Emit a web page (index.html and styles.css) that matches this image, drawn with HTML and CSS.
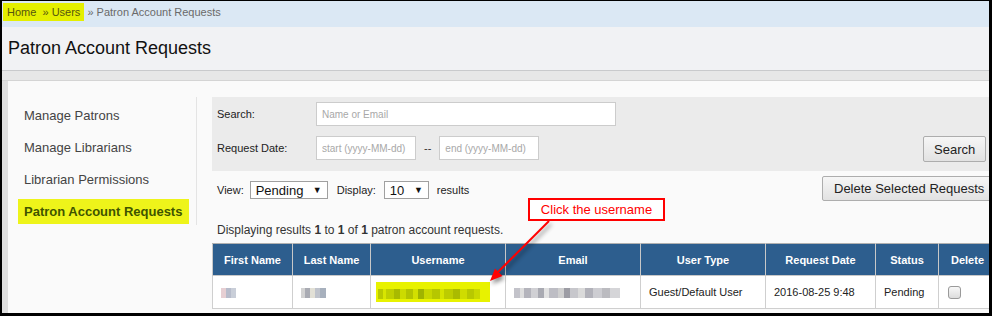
FILE: index.html
```html
<!DOCTYPE html>
<html lang="en">
<head>
    <meta charset="UTF-8">
    <title>Patron Account Requests</title>
    <link rel="stylesheet" href="styles.css">
</head>
<body>
    <div class="frame">
        <div class="breadcrumb">
            <span class="mark">Home&nbsp; » Users</span> » Patron Account Requests
        </div>

        <div class="page-header">
            <h1>Patron Account Requests</h1>
        </div>
        <div class="band"></div>

        <div class="content">
            <ul class="side-nav">
                <li>Manage Patrons</li>
                <li>Manage Librarians</li>
                <li>Librarian Permissions</li>
                <li class="active">Patron Account Requests</li>
            </ul>

            <div class="main">
                <div class="search-panel">
                    <div class="search-row">
                        <label>Search:</label>
                        <input class="field wide" type="text" placeholder="Name or Email">
                    </div>
                    <div class="search-row">
                        <label>Request Date:</label>
                        <input class="field date" type="text" placeholder="start (yyyy-MM-dd)">
                        <span class="dash">--</span>
                        <input class="field date" type="text" placeholder="end (yyyy-MM-dd)">
                        <button class="btn search-btn">Search</button>
                    </div>
                </div>

                <div class="view-row">
                    <span class="lbl">View:</span>
                    <div class="select view-select"><span>Pending</span><span class="caret">▼</span></div>
                    <span class="lbl">Display:</span>
                    <div class="select count-select"><span>10</span><span class="caret">▼</span></div>
                    <span class="lbl">results</span>
                    <button class="btn delete-btn">Delete Selected Requests</button>
                </div>

                <p class="info">Displaying results <b>1</b> to <b>1</b> of <b>1</b> patron account requests.</p>

                <table class="requests">
                    <colgroup>
                        <col style="width: 80px">
                        <col style="width: 78px">
                        <col style="width: 135px">
                        <col style="width: 135px">
                        <col style="width: 125px">
                        <col style="width: 110px">
                        <col style="width: 63px">
                        <col style="width: 58px">
                    </colgroup>
                    <thead>
                        <tr>
                            <th>First Name</th>
                            <th>Last Name</th>
                            <th>Username</th>
                            <th>Email</th>
                            <th>User Type</th>
                            <th>Request Date</th>
                            <th>Status</th>
                            <th>Delete</th>
                        </tr>
                    </thead>
                    <tbody>
                        <tr>
                            <td><span class="blur blur-first"></span></td>
                            <td><span class="blur blur-last"></span></td>
                            <td class="user-cell"><span class="user-mark"><span class="blur blur-user"></span></span></td>
                            <td><span class="blur blur-email"></span></td>
                            <td>Guest/Default User</td>
                            <td>2016-08-25 9:48</td>
                            <td>Pending</td>
                            <td><span class="check"></span></td>
                        </tr>
                    </tbody>
                </table>

                <!-- annotation -->
                <div class="callout">Click the username</div>
                <svg class="callout-arrow" width="80" height="75" viewBox="0 0 80 75">
                    <line x1="69" y1="7" x2="18" y2="58" stroke="#ff0000" stroke-width="2"/>
                    <polygon points="10,67 22.5,62 15,54.5" fill="#ff0000"/>
                </svg>
            </div>
        </div>
    </div>
</body>
</html>
```

FILE: styles.css
```css
* {
    margin: 0;
    padding: 0;
    box-sizing: border-box;
}

body {
    background: #000;
    font-family: 'Liberation Sans', Arial, sans-serif;
    height: 316px;
    overflow: hidden;
}

.frame {
    margin: 1px 3px 0 2px;
    height: 312px;
    background: #fafafa;
    overflow: hidden;
}

/* breadcrumb */
.breadcrumb {
    height: 26px;
    background: #dbe8f4;
    padding: 2px 0 0 1px;
    font-size: 11px;
    color: #6a6a6a;
    white-space: nowrap;
}

.breadcrumb .mark {
    display: inline-block;
    height: 18px;
    line-height: 19px;
    padding: 0 4px;
    background: #e4ef00;
    color: #55560f;
}

.page-header {
    height: 44px;
    background: #f1f2f4;
    border-bottom: 1px solid #c9cacc;
    padding-left: 6px;
}

.page-header h1 {
    font-size: 18px;
    font-weight: normal;
    line-height: 43px;
    color: #111;
}

.band {
    height: 10px;
    background: #e7e7e7;
    border-bottom: 1px solid #d4d4d4;
}

.content {
    display: flex;
    align-items: flex-start;
    border-left: 6px solid #dedede;
    height: 240px;
}

/* left menu */
.side-nav {
    list-style: none;
    width: 189px;
    flex-shrink: 0;
    margin-top: 16px;
    padding-top: 6px;
    height: 128px;
    border-right: 1px solid #e4e4e4;
}

.side-nav li {
    height: 24px;
    line-height: 25px;
    margin: 0 0 8px 10px;
    padding-left: 6px;
    width: 171px;
    font-size: 13px;
    color: #444;
    white-space: nowrap;
}

.side-nav li.active {
    height: 25px;
    background: #eef41a;
    color: #3f5400;
    font-weight: bold;
}

/* main */
.main {
    position: relative;
    width: 784px;
    flex-shrink: 0;
    margin: 16px 0 0 15px;
}

.search-panel {
    background: #ebebeb;
    padding: 5px 10px 10px 5px;
    height: 74px;
}

.search-row {
    display: flex;
    align-items: center;
}

.search-row + .search-row {
    margin-top: 10px;
    align-items: flex-start;
}

.search-row label {
    width: 99px;
    font-size: 11px;
    color: #222;
    line-height: 24px;
}

.field {
    height: 24px;
    border: 1px solid #cccccc;
    background: #fff;
    padding: 0 5px;
    font-family: 'Liberation Sans', Arial, sans-serif;
    font-size: 10px;
    outline: none;
}

.field::placeholder {
    color: #a8a8a8;
}

.field.wide {
    width: 300px;
}

.field.date {
    width: 100px;
}

.dash {
    font-size: 11px;
    color: #333;
    line-height: 24px;
    margin: 0 8px 0 8px;
}

.btn {
    font-family: 'Liberation Sans', Arial, sans-serif;
    font-size: 13px;
    color: #222;
    background: linear-gradient(#f6f6f6, #e2e2e2);
    border: 1px solid #adadad;
    border-radius: 2px;
    padding: 0 10px;
}

.search-btn {
    margin-left: auto;
    height: 26px;
    width: 63px;
}

.view-row {
    display: flex;
    align-items: center;
    margin-top: 5px;
    height: 25px;
    padding-left: 5px;
}

.lbl {
    font-size: 11px;
    color: #222;
    margin-top: 3px;
}

.select {
    display: flex;
    align-items: center;
    justify-content: space-between;
    height: 18px;
    margin-top: 3px;
    border: 1px solid #a0a0a0;
    background: #fff;
    font-size: 13px;
    color: #111;
    padding: 0 5px 0 5px;
}

.select .caret {
    font-size: 9px;
}

.view-select {
    width: 78px;
    margin: 3px 9px 0 6px;
}

.count-select {
    width: 45px;
    margin: 3px 8px 0 8px;
}

.delete-btn {
    margin-left: auto;
    height: 25px;
    width: 174px;
    padding-left: 11px;
    text-align: left;
}

.info {
    margin-top: 20px;
    font-size: 12px;
    line-height: 18px;
    color: #333;
    padding-left: 5px;
}

/* table */
.requests {
    margin-top: 4px;
    width: 784px;
    table-layout: fixed;
    border-collapse: collapse;
    font-size: 11px;
}

.requests th {
    height: 32px;
    background: #2d5e8e;
    color: #fff;
    font-weight: bold;
    border: 1px solid #c8c8c8;
    border-top-color: #b0b0b0;
    text-align: center;
}

.requests td {
    height: 33px;
    background: #fff;
    border: 1px solid #cfcfcf;
    padding-left: 8px;
    color: #222;
    white-space: nowrap;
}

.requests td.user-cell {
    padding-left: 5px;
}

.user-mark {
    display: inline-block;
    width: 114px;
    height: 20px;
    background: #e8f200;
    padding: 5px 0 0 2px;
    vertical-align: middle;
}

.blur {
    display: inline-block;
    height: 10px;
    vertical-align: middle;
}

.blur-first {
    width: 15px;
    background: linear-gradient(90deg, #e6cfd3 0 5px, #b7bccb 5px 10px, #c9ced8 10px);
}

.blur-last {
    width: 25px;
    background: linear-gradient(90deg, #d2d2d2 0 4px, #a9abb3 4px 9px, #e2e0d6 9px 14px, #bfc3cc 14px 19px, #a7b0bd 19px);
}

.blur-user {
    width: 102px;
    background: linear-gradient(90deg,
        #b9c900 0 5px, #d8e600 5px 8px, #bfcf00 8px 16px, #a8ba00 16px 22px,
        #ccdb00 22px 28px, #b3c400 28px 35px, #d2e000 35px 40px, #9fb400 40px 46px,
        #c7d700 46px 54px, #b6c700 54px 62px, #d5e300 62px 66px, #bccc00 66px 75px,
        #aabb00 75px 82px, #cfdc00 82px 89px, #b8c800 89px 96px, #c9d800 96px);
}

.blur-email {
    width: 106px;
    background: linear-gradient(90deg,
        #c3c3ca 0 6px, #dedede 6px 10px, #b4b4bc 10px 17px, #d0d0d4 17px 24px,
        #a9aab2 24px 30px, #e2e2e2 30px 35px, #bdbdc4 35px 44px, #cfcfcf 44px 50px,
        #9c9ca4 50px 56px, #c7c7cc 56px 64px, #dadada 64px 71px, #b2b2ba 71px 79px,
        #cdcdd2 79px 88px, #bbbbc0 88px 96px, #d5d5d8 96px);
}

.check {
    display: inline-block;
    width: 13px;
    height: 13px;
    margin-left: 1px;
    border: 1px solid #9a9a9a;
    border-radius: 3px;
    background: linear-gradient(#f8f8f8, #dcdcdc);
    vertical-align: middle;
}

/* annotation */
.callout {
    position: absolute;
    left: 316px;
    top: 101px;
    width: 137px;
    height: 23px;
    border: 2px solid #ff0000;
    background: #fff;
    color: #ff0000;
    font-size: 13px;
    line-height: 19px;
    text-align: center;
}

.callout-arrow {
    position: absolute;
    left: 268px;
    top: 117px;
    filter: drop-shadow(2px 3px 2px rgba(0, 0, 0, 0.45));
}
```
